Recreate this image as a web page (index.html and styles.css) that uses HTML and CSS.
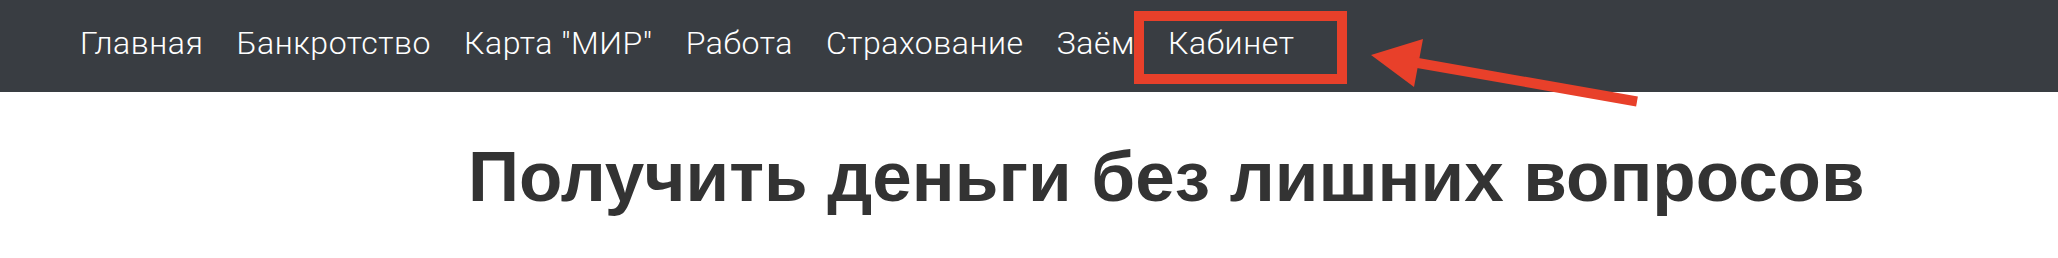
FILE: index.html
```html
<!DOCTYPE html>
<html lang="ru">
<head>
    <meta charset="UTF-8">
    <meta name="viewport" content="width=device-width, initial-scale=1.0">
    <title>Получить деньги без лишних вопросов</title>
    <link rel="stylesheet" href="styles.css">
</head>
<body>
    <div class="nav">
        <a href="#">Главная</a>
        <a href="#">Банкротство</a>
        <a href="#">Карта "МИР"</a>
        <a href="#">Работа</a>
        <a href="#">Страхование</a>
        <a href="#">Заём</a>
        <a href="#" class="cabinet">Кабинет</a>
    </div>

    <div class="hero">
        <h1>Получить деньги без лишних вопросов</h1>
    </div>

    <!-- annotation: red box + arrow -->
    <svg class="mark" width="2058" height="258" viewBox="0 0 2058 258">
        <rect x="1139" y="16" width="203" height="63" fill="none" stroke="#e8402a" stroke-width="10"/>
        <polygon points="1371,55 1423,39 1414,87" fill="#e8402a"/>
        <line x1="1412" y1="62" x2="1637" y2="101.5" stroke="#e8402a" stroke-width="10"/>
    </svg>
</body>
</html>
```

FILE: styles.css
```css
body {
    margin: 0;
    background-color: #fff;
    font-family: Roboto, "Liberation Sans", sans-serif;
    position: relative;
}
.nav {
    background-color: #393d42;
    height: 92px;
    padding: 0 0 6px 80px;
    box-sizing: border-box;
    display: flex;
    align-items: center;
    gap: 33px;
}
.nav a {
    color: #fff;
    text-decoration: none;
    font-family: "Roboto Light", Roboto, sans-serif;
    font-weight: 300;
    font-size: 32px;
    letter-spacing: 0.55px;
}
.hero {
    padding-left: 468px;
}
h1 {
    margin: 44px 0 0;
    font-family: "Liberation Sans", Arial, sans-serif;
    font-weight: bold;
    font-size: 71px;
    color: #333;
}
.mark {
    position: absolute;
    top: 0;
    left: 0;
}
```
